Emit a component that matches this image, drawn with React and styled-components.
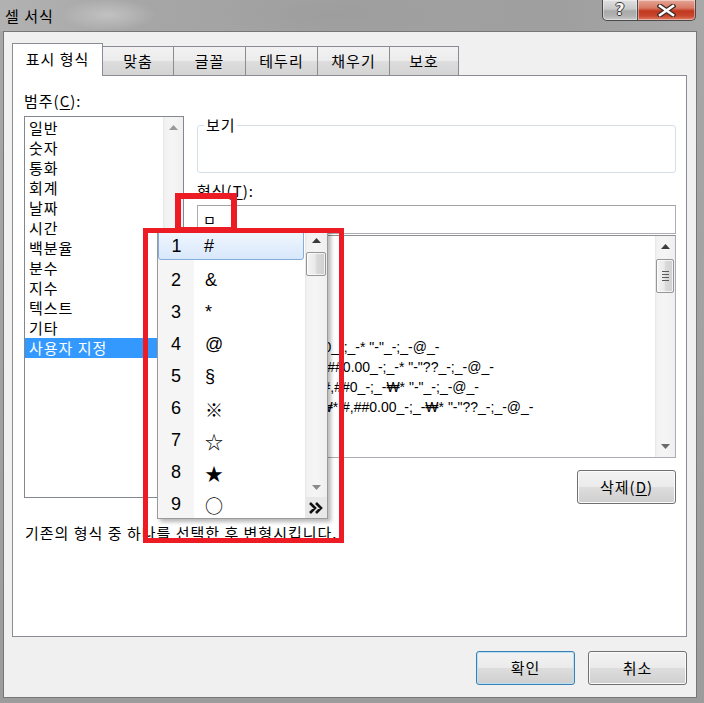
import React from 'react';
import styled, { createGlobalStyle } from 'styled-components';

const KR = `"Noto Sans CJK KR", "Liberation Sans", sans-serif`;
const LAT = `"Liberation Sans", "Noto Sans CJK KR", sans-serif`;

const GlobalStyle = createGlobalStyle`
  * { box-sizing: border-box; }
  html, body { margin: 0; padding: 0; }
  body {
    width: 704px; height: 703px; overflow: hidden;
    background: #a6a6a6;
    font-family: ${KR};
    letter-spacing: 1px;
    color: #000;
  }
`;

const Frame = styled.div`
  position: relative;
  width: 704px;
  height: 703px;
  overflow: hidden;
  display: flex;
  flex-direction: column;
  background: linear-gradient(to bottom, #a7a7a7, #9c9c9c);
`;

const TitleBar = styled.div`
  height: 31px;
  flex-shrink: 0;
  display: flex;
  justify-content: space-between;
  align-items: flex-start;
  background:
    radial-gradient(ellipse 48px 16px at 108px 15px, rgba(196,196,196,0.9), rgba(196,196,196,0) 100%),
    radial-gradient(ellipse 120px 26px at 330px 14px, rgba(150,150,150,0.35), rgba(150,150,150,0) 100%),
    linear-gradient(to right, #b2b2b2 0%, #a6a6a6 20%, #a1a1a1 50%, #9f9f9f 80%, #a8a8a8 100%);
`;

const Title = styled.div`
  padding-left: 5px;
  font-size: 15px;
  line-height: 31px;
  color: #000;
`;

const Controls = styled.div`
  display: flex;
  margin-right: 8px;
`;

const CaptionButton = styled.div`
  height: 21px;
  width: ${p => p.$w}px;
  display: flex;
  align-items: center;
  justify-content: center;
  border: 1px solid #4a4a4a;
  border-top: none;
  border-radius: ${p => (p.$left ? '0 0 0 5px' : '0 0 5px 0')};
  border-left-width: ${p => (p.$left ? 1 : 0)}px;
  background: ${p =>
    p.$close
      ? 'linear-gradient(to bottom, #e5a595 0%, #d87a64 40%, #c2381f 55%, #c9472d 80%, #e08067 100%)'
      : 'linear-gradient(to bottom, #e0e0e0 0%, #c8c8c8 45%, #a9a9a9 55%, #b2b2b2 80%, #cacaca 100%)'};
  box-shadow: inset 0 0 0 1px rgba(255,255,255,0.4);
`;

const HelpGlyph = styled.span`
  font-family: "DejaVu Sans", sans-serif;
  font-weight: bold;
  font-size: 16px;
  line-height: 16px;
  letter-spacing: 0;
  color: #f4f4f4;
  text-shadow: 1px 0 #3a3a3a, -1px 0 #3a3a3a, 0 1px #3a3a3a, 0 -1px #3a3a3a;
`;

const Body = styled.div`
  margin: 0 7px 0 3px;
  height: 667px;
  border: 1px solid #767676;
  background: #f0f0f0;
  padding: 11px 9px 0 8px;
  display: flex;
  flex-direction: column;
`;

const TabStrip = styled.div`
  height: 32px;
  display: flex;
  align-items: flex-end;
  position: relative;
  z-index: 1;
`;

const Tab = styled.div`
  width: ${p => p.$w}px;
  height: ${p => (p.$active ? 33 : 29)}px;
  margin-bottom: ${p => (p.$active ? -1 : 0)}px;
  margin-left: ${p => (p.$first ? 0 : -1)}px;
  border: 1px solid #898c95;
  border-bottom: none;
  background: ${p =>
    p.$active ? '#ffffff' : 'linear-gradient(to bottom, #f2f2f2 0%, #ebebeb 50%, #dddddd 51%, #d4d4d4 100%)'};
  display: flex;
  align-items: center;
  justify-content: center;
  font-size: 15px;
  line-height: 20px;
  padding-bottom: ${p => (p.$active ? 2 : 0)}px;
`;

const Panel = styled.div`
  height: 562px;
  border: 1px solid #898c95;
  background: #ffffff;
  padding: 15px 10px 0 11px;
  display: grid;
  grid-template-columns: 160px 1fr;
  grid-template-rows: auto auto;
  column-gap: 13px;
  align-content: start;
`;

const Column = styled.div`
  display: flex;
  flex-direction: column;
`;

const Label = styled.div`
  font-size: 15px;
  line-height: 20px;
  height: 20px;
  margin-top: ${p => p.$mt || 0}px;
  margin-bottom: ${p => p.$mb || 0}px;
  u { text-decoration: underline; text-underline-offset: 2px; }
`;

const ListBox = styled.div`
  height: 382px;
  border: 1px solid #828790;
  display: flex;
`;

const ListItems = styled.div`
  flex: 1;
  padding-top: 1px;
`;

const ListItem = styled.div`
  height: 20px;
  line-height: 20px;
  padding-left: 4px;
  font-size: 15px;
  background: ${p => (p.$selected ? '#3399ff' : 'transparent')};
  color: ${p => (p.$selected ? '#ffffff' : '#000000')};
`;

const ScrollTrack = styled.div`
  width: ${p => p.$w}px;
  flex-shrink: 0;
  display: flex;
  flex-direction: column;
  background: linear-gradient(to right, #e6e6e6 0px, #f2f2f2 2px, #f5f5f5 50%, #efefef 100%);
`;

const ScrollBtn = styled.div`
  height: ${p => p.$h}px;
  flex-shrink: 0;
  display: flex;
  align-items: center;
  justify-content: center;
  background: ${p => p.$bg || 'transparent'};
`;

const ScrollBody = styled.div`
  flex: 1;
  padding: ${p => p.$offset}px 1px 0 1px;
`;

const Thumb = styled.div`
  height: ${p => p.$h}px;
  border: 1px solid #969696;
  border-radius: 2px;
  background: linear-gradient(to right, #f4f4f4 0%, #e9e9e9 45%, #d9d9d9 55%, #d0d0d0 100%);
  box-shadow: inset 0 0 0 1px rgba(255,255,255,0.7);
  display: flex;
  flex-direction: column;
  align-items: center;
  justify-content: center;
  gap: 2px;
`;

const Grip = styled.div`
  width: 7px;
  height: 1px;
  background: #5a5a5a;
`;

const GroupBox = styled.div`
  position: relative;
  margin-top: 34px;
  height: 48px;
  border: 1px solid #d5dfe5;
  border-radius: 3px;
`;

const Legend = styled.span`
  position: absolute;
  left: 6px;
  top: -10px;
  padding: 0 1px 0 2px;
  background: #ffffff;
  font-size: 15px;
  line-height: 18px;
`;

const TextInput = styled.div`
  margin-top: 4px;
  height: 29px;
  border: 1px solid #abadb3;
  border-top-color: #a3a3a3;
  padding-left: 5px;
  font-size: 14px;
  line-height: 27px;
`;

const FormatList = styled.div`
  margin-top: 1px;
  height: 223px;
  border: 1px solid #abadb3;
  border-top-color: #8e8f8f;
  display: flex;
`;

const FormatLines = styled.div`
  flex: 1;
  padding: 1px 0 0 11px;
  overflow: hidden;
`;

const FormatLine = styled.div`
  height: 20px;
  line-height: 20px;
  font-family: ${LAT};
  font-size: 14px;
  letter-spacing: 0;
  white-space: nowrap;
`;

const DeleteRow = styled.div`
  margin-top: 12px;
  display: flex;
  justify-content: flex-end;
`;

const Button = styled.div`
  width: 99px;
  height: 34px;
  border: 1px solid ${p => (p.$default ? '#3c7fb1' : '#707070')};
  border-radius: 3px;
  background: linear-gradient(to bottom, #f2f2f2 0%, #ebebeb 50%, #dddddd 51%, #cfcfcf 100%);
  box-shadow: inset 0 0 0 1px ${p => (p.$default ? '#b9e0f6' : '#fbfbfb')};
  display: flex;
  align-items: center;
  justify-content: center;
  font-size: 15px;
  line-height: 20px;
  u { text-decoration: underline; text-underline-offset: 2px; }
`;

const Description = styled.div`
  grid-column: 1 / span 2;
  margin-top: 19px;
  padding-left: 1px;
  font-size: 15px;
  line-height: 20px;
  white-space: nowrap;
`;

const ButtonRow = styled.div`
  margin-top: 14px;
  display: flex;
  justify-content: flex-end;
  gap: 13px;
`;

/* IME candidate popup */
const Popup = styled.div`
  position: absolute;
  left: 157px;
  top: 229px;
  width: 171px;
  height: 290px;
  border: 1px solid #9a9a9a;
  background: #ffffff;
  display: flex;
  box-shadow: 3px 3px 4px rgba(0, 0, 0, 0.28);
  z-index: 5;
  letter-spacing: 0;
`;

const CandList = styled.div`
  width: 147px;
  background: linear-gradient(to right, #f5f5f5 0, #f5f5f5 36px, #ffffff 36px);
`;

const CandRow = styled.div`
  display: flex;
  height: ${p => (p.$selected ? 30 : 32)}px;
  margin-bottom: ${p => (p.$selected ? 2 : 0)}px;
  margin-right: ${p => (p.$selected ? 1 : 0)}px;
  border: ${p => (p.$selected ? '1px solid #84acdd' : 'none')};
  border-radius: ${p => (p.$selected ? 3 : 0)}px;
  background: ${p => (p.$selected ? 'linear-gradient(to bottom, #f1f7fe, #d8e8fb)' : 'transparent')};
  font-family: ${LAT};
  font-size: 18px;
`;

const CandNum = styled.div`
  width: ${p => (p.$selected ? 35 : 36)}px;
  display: flex;
  align-items: center;
  justify-content: center;
  padding-top: ${p => (p.$selected ? 3 : 5)}px;
`;

const CandSym = styled.div`
  flex: 1;
  display: flex;
  align-items: center;
  padding-left: ${p => (p.$selected ? 10 : 11)}px;
  padding-top: ${p => (p.$selected ? 3 : 5)}px;
  font-family: ${p => (p.$cjk ? KR : LAT)};
`;

const Mark = styled.div`
  position: absolute;
  left: ${p => p.$x}px;
  top: ${p => p.$y}px;
  width: ${p => p.$w}px;
  height: ${p => p.$h}px;
  border: ${p => p.$t}px solid #ed1c24;
  z-index: 10;
  pointer-events: none;
`;

const Arrow = ({ dir = 'up', color = '#3c3c3c' }) => (
  <svg width="9" height="5" viewBox="0 0 9 5">
    {dir === 'up' ? (
      <path d="M0 5 L4.5 0 L9 5 Z" fill={color} />
    ) : (
      <path d="M0 0 L4.5 5 L9 0 Z" fill={color} />
    )}
  </svg>
);

const CloseIcon = () => (
  <svg width="19" height="13" viewBox="0 0 19 13">
    <path d="M3 2 L16 11 M16 2 L3 11" stroke="#3d2a26" strokeWidth="5" strokeLinecap="square" />
    <path d="M3 2 L16 11 M16 2 L3 11" stroke="#ffffff" strokeWidth="2.6" strokeLinecap="square" />
  </svg>
);

const MoreIcon = () => (
  <svg width="16" height="14" viewBox="0 0 16 14">
    <path d="M2 2 L7 7 L2 12 M8 2 L13 7 L8 12" fill="none" stroke="#111" strokeWidth="2.6" />
  </svg>
);

const categories = ['일반', '숫자', '통화', '회계', '날짜', '시간', '백분율', '분수', '지수', '텍스트', '기타', '사용자 지정'];

const formats = [
  'G/표준',
  '0',
  '0.00',
  '#,##0',
  '#,##0.00',
  '_-* #,##0_-;-* #,##0_-;_-* "-"_-;_-@_-',
  '_-* #,##0.00_-;-* #,##0.00_-;_-* "-"??_-;_-@_-',
  '_-₩* #,##0_-;-₩* #,##0_-;_-₩* "-"_-;_-@_-',
  '_-₩* #,##0.00_-;-₩* #,##0.00_-;_-₩* "-"??_-;_-@_-',
  '0%',
];

const candidates = [
  { s: '#' },
  { s: '&' },
  { s: '*' },
  { s: '@' },
  { s: '§' },
  { s: '※', cjk: true },
  { s: '☆', cjk: true },
  { s: '★', cjk: true },
  { s: '○', cjk: true },
];

const tabs = [
  { label: '표시 형식', w: 91, active: true },
  { label: '맞춤', w: 72 },
  { label: '글꼴', w: 73 },
  { label: '테두리', w: 73 },
  { label: '채우기', w: 73 },
  { label: '보호', w: 70 },
];

export default function App() {
  return (
    <>
      <GlobalStyle />
      <Frame>
        <TitleBar>
          <Title>셀 서식</Title>
          <Controls>
            <CaptionButton $w={36} $left>
              <HelpGlyph>?</HelpGlyph>
            </CaptionButton>
            <CaptionButton $w={58} $close>
              <CloseIcon />
            </CaptionButton>
          </Controls>
        </TitleBar>

        <Body>
          <TabStrip>
            {tabs.map((t, i) => (
              <Tab key={t.label} $w={t.w} $active={t.active} $first={i === 0}>
                {t.label}
              </Tab>
            ))}
          </TabStrip>

          <Panel>
            <Column>
              <Label $mb={5}>
                범주(<u>C</u>):
              </Label>
              <ListBox>
                <ListItems>
                  {categories.map((c, i) => (
                    <ListItem key={c} $selected={i === categories.length - 1}>
                      {c}
                    </ListItem>
                  ))}
                </ListItems>
                <ScrollTrack $w={20}>
                  <ScrollBtn $h={21}>
                    <Arrow dir="up" color="#9a9a9a" />
                  </ScrollBtn>
                  <ScrollBody $offset={0} />
                  <ScrollBtn $h={21}>
                    <Arrow dir="down" color="#9a9a9a" />
                  </ScrollBtn>
                </ScrollTrack>
              </ListBox>
            </Column>

            <Column>
              <GroupBox>
                <Legend>보기</Legend>
              </GroupBox>
              <Label $mt={8}>
                형식(<u>T</u>):
              </Label>
              <TextInput>ㅁ</TextInput>
              <FormatList>
                <FormatLines>
                  {formats.map(f => (
                    <FormatLine key={f}>{f}</FormatLine>
                  ))}
                </FormatLines>
                <ScrollTrack $w={20}>
                  <ScrollBtn $h={21}>
                    <Arrow dir="up" />
                  </ScrollBtn>
                  <ScrollBody $offset={2}>
                    <Thumb $h={34}>
                      <Grip />
                      <Grip />
                      <Grip />
                      <Grip />
                    </Thumb>
                  </ScrollBody>
                  <ScrollBtn $h={21}>
                    <Arrow dir="down" color="#6a6a6a" />
                  </ScrollBtn>
                </ScrollTrack>
              </FormatList>
              <DeleteRow>
                <Button>
                  삭제(<u>D</u>)
                </Button>
              </DeleteRow>
            </Column>

            <Description>기존의 형식 중 하나를 선택한 후 변형시킵니다.</Description>
          </Panel>

          <ButtonRow>
            <Button $default>확인</Button>
            <Button>취소</Button>
          </ButtonRow>
        </Body>

        <Popup>
          <CandList>
            {candidates.map((c, i) => (
              <CandRow key={c.s} $selected={i === 0}>
                <CandNum $selected={i === 0}>{i + 1}</CandNum>
                <CandSym $selected={i === 0} $cjk={c.cjk}>
                  {c.s}
                </CandSym>
              </CandRow>
            ))}
          </CandList>
          <ScrollTrack $w={22}>
            <ScrollBtn $h={20}>
              <Arrow dir="up" />
            </ScrollBtn>
            <ScrollBody $offset={2}>
              <Thumb $h={24} />
            </ScrollBody>
            <ScrollBtn $h={20}>
              <Arrow dir="down" color="#8a8a8a" />
            </ScrollBtn>
            <ScrollBtn $h={21} $bg="#e8e8e8">
              <MoreIcon />
            </ScrollBtn>
          </ScrollTrack>
        </Popup>

        <Mark $x={175} $y={193} $w={62} $h={40} $t={6} />
        <Mark $x={143} $y={228} $w={201} $h={315} $t={5} />
      </Frame>
    </>
  );
}
